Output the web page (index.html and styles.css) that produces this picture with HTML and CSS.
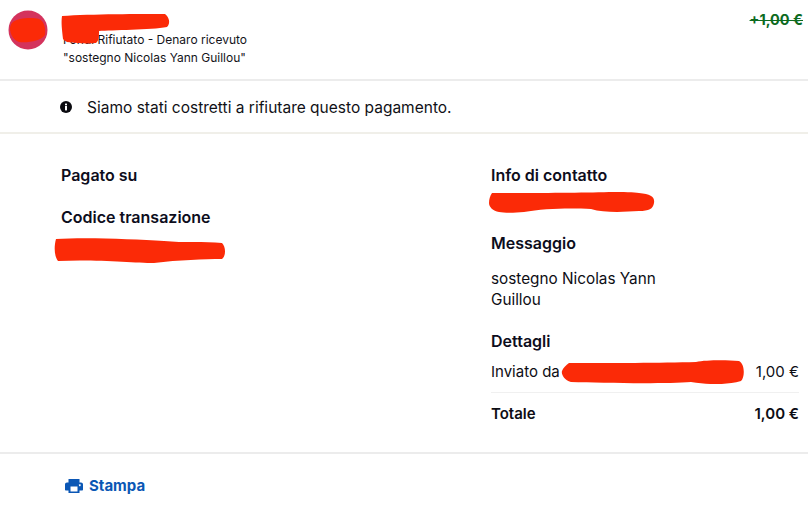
FILE: index.html
```html
<!DOCTYPE html>
<html lang="en">
<head>
    <meta charset="UTF-8">
    <meta name="viewport" content="width=device-width, initial-scale=1.0">
    <title>Pagamento rifiutato</title>
    <link rel="stylesheet" href="styles.css">
</head>
<body>
    <div class="header">
        <div class="avatar">
            <svg viewBox="0 0 40 40" width="40" height="40">
                <circle cx="20" cy="20" r="19.500" fill="#d4335c"/>
                <path class="scribble" d="M5 12C10 8 24 7 31 9C36 11 38 18 37 25C33 31 20 33 11 32C5 30 2 24 2 18C2.500 15 3.500 13 5 12Z"/>
            </svg>
        </div>
        <div class="header-text">
            <div class="summary">Fondi Rifiutato - Denaro ricevuto</div>
            <div class="summary">"sostegno Nicolas Yann Guillou"</div>
            <svg class="mark mark-name" viewBox="0 0 110 32" width="110" height="32">
                <path class="scribble" d="M1 3C30 1 80 1 104 1C108 4 110 10 106 14C90 17 50 17 38 18C38 23 38 28 35 30C26 31 16 30 6 29C4 28 3 27 2 26C1 16 0 10 1 3Z"/>
            </svg>
        </div>
        <div class="header-amount">+1,00 €</div>
    </div>

    <div class="notice">
        <svg class="info-icon" viewBox="0 0 12 12" width="12" height="12">
            <circle cx="6" cy="6" r="6" fill="#0b0b10"/>
            <rect x="5" y="5" width="2" height="4.400" fill="#fff"/>
            <rect x="5" y="2.600" width="2" height="1.700" fill="#fff"/>
        </svg>
        <span>Siamo stati costretti a rifiutare questo pagamento.</span>
    </div>

    <div class="details">
        <div class="col-left">
            <h3 class="label">Pagato su</h3>
            <h3 class="label label-code">Codice transazione</h3>
            <svg class="mark mark-code" viewBox="0 0 172 26" width="172" height="26">
                <path class="scribble" d="M2 1C30 -1 80 1 110 3C130 5 150 3 168 5C172 9 172 18 168 21C150 21 125 22 100 25C80 25 40 21 4 23C0 18 0 8 2 1Z"/>
            </svg>
        </div>
        <div class="col-right">
            <h3 class="label">Info di contatto</h3>
            <div class="contact-space">
                <svg class="mark mark-contact" viewBox="0 0 166 21" width="166" height="21">
                    <path class="scribble" d="M3 1C40 1 90 1 120 0C135 0 145 0 150 1C162 2 166 5 165 11C164 17 160 19 150 19C135 20 115 21 102 17C85 16 55 16 35 20C25 21 15 21 10 20C4 19 0 15 0 11C0 7 1 4 3 1Z"/>
                </svg>
            </div>
            <h3 class="label">Messaggio</h3>
            <p class="message">sostegno Nicolas Yann<br>Guillou</p>
            <h3 class="label">Dettagli</h3>
            <div class="row row-sender">
                <span>Inviato da</span>
                <span>1,00 €</span>
                <svg class="mark mark-sender" viewBox="0 0 184 24" width="184" height="24">
                    <path class="scribble" d="M8 3C50 3 100 3 135 2C145 0 165 0 178 1C184 4 184 17 180 21C165 25 150 25 130 22C105 24 40 23 10 22C3 20 0 14 1 11C2 8 5 5 8 3Z"/>
                </svg>
            </div>
            <div class="row row-total">
                <span>Totale</span>
                <span>1,00 €</span>
            </div>
        </div>
    </div>

    <div class="footer">
        <a class="print-link">
            <svg viewBox="0 0 18 14" width="18" height="14">
                <path fill-rule="evenodd" d="M3.500 0H14.500V3.500H16C17.200 3.500 18 4.300 18 5.500V10.500C18 11.100 17.600 11.500 17 11.500H14.500V14H3.500V11.500H1C0.400 11.500 0 11.100 0 10.500V5.500C0 4.300 0.800 3.500 2 3.500H3.500ZM5.500 7.500V12.500H12.500V7.500ZM14.800 5.300A0.900 0.900 0 1 0 14.801 5.300Z" fill="#0b57b5"/>
            </svg>
            <span>Stampa</span>
        </a>
    </div>
</body>
</html>
```

FILE: styles.css
```css
* {
    box-sizing: border-box;
}
body {
    font-family: Inter, "Liberation Sans", sans-serif;
    margin: 0;
    background-color: white;
    color: #0d0d14;
    overflow: hidden;
}
.scribble {
    fill: #fb2a07;
}
.mark {
    position: absolute;
    display: block;
}
.header {
    height: 81px;
    border-bottom: 2px solid #ececec;
    display: flex;
    padding: 10px 5px 0 8px;
}
.avatar {
    width: 40px;
    height: 40px;
}
.header-text {
    position: relative;
    margin-left: 15px;
    padding-top: 21px;
    flex: 1;
}
.summary {
    font-size: 12px;
    line-height: 17.500px;
    color: #14141a;
}
.mark-name {
    left: -2px;
    top: 3px;
}
.header-amount {
    font-size: 14.500px;
    font-weight: 700;
    line-height: 20px;
    color: #0d6b1f;
    text-decoration: line-through;
}
.notice {
    height: 53px;
    border-bottom: 2px solid #f0efe9;
    display: flex;
    align-items: center;
    padding: 1px 0 0 60px;
    font-size: 15.500px;
    color: #111116;
}
.info-icon {
    margin-right: 15px;
}
.details {
    height: 320px;
    border-bottom: 2px solid #ececec;
    display: flex;
    padding: 31px 9px 0 61px;
}
.col-left {
    position: relative;
    width: 430px;
}
.col-right {
    flex: 1;
}
.label {
    font-size: 16px;
    font-weight: 600;
    line-height: 20px;
    margin: 0;
    color: #0d0d1c;
}
.label-code {
    margin-top: 22px;
}
.mark-code {
    left: -7px;
    top: 73px;
}
.contact-space {
    position: relative;
    height: 48px;
}
.mark-contact {
    left: -2px;
    top: 7px;
}
.message {
    font-size: 15.300px;
    line-height: 21px;
    margin: 15px 0 21px;
}
.row {
    position: relative;
    display: flex;
    justify-content: space-between;
    font-size: 15px;
    line-height: 20px;
}
.row-sender {
    margin-top: 11px;
    padding-bottom: 10px;
    border-bottom: 1px solid #f0f0f0;
}
.mark-sender {
    left: 70px;
    top: -2px;
}
.row-total {
    margin-top: 11px;
    font-weight: 600;
}
.footer {
    padding: 22px 0 0 65px;
}
.print-link {
    display: flex;
    align-items: center;
    gap: 6px;
    font-size: 15px;
    font-weight: 700;
    line-height: 20px;
    color: #0b57b5;
}
```
